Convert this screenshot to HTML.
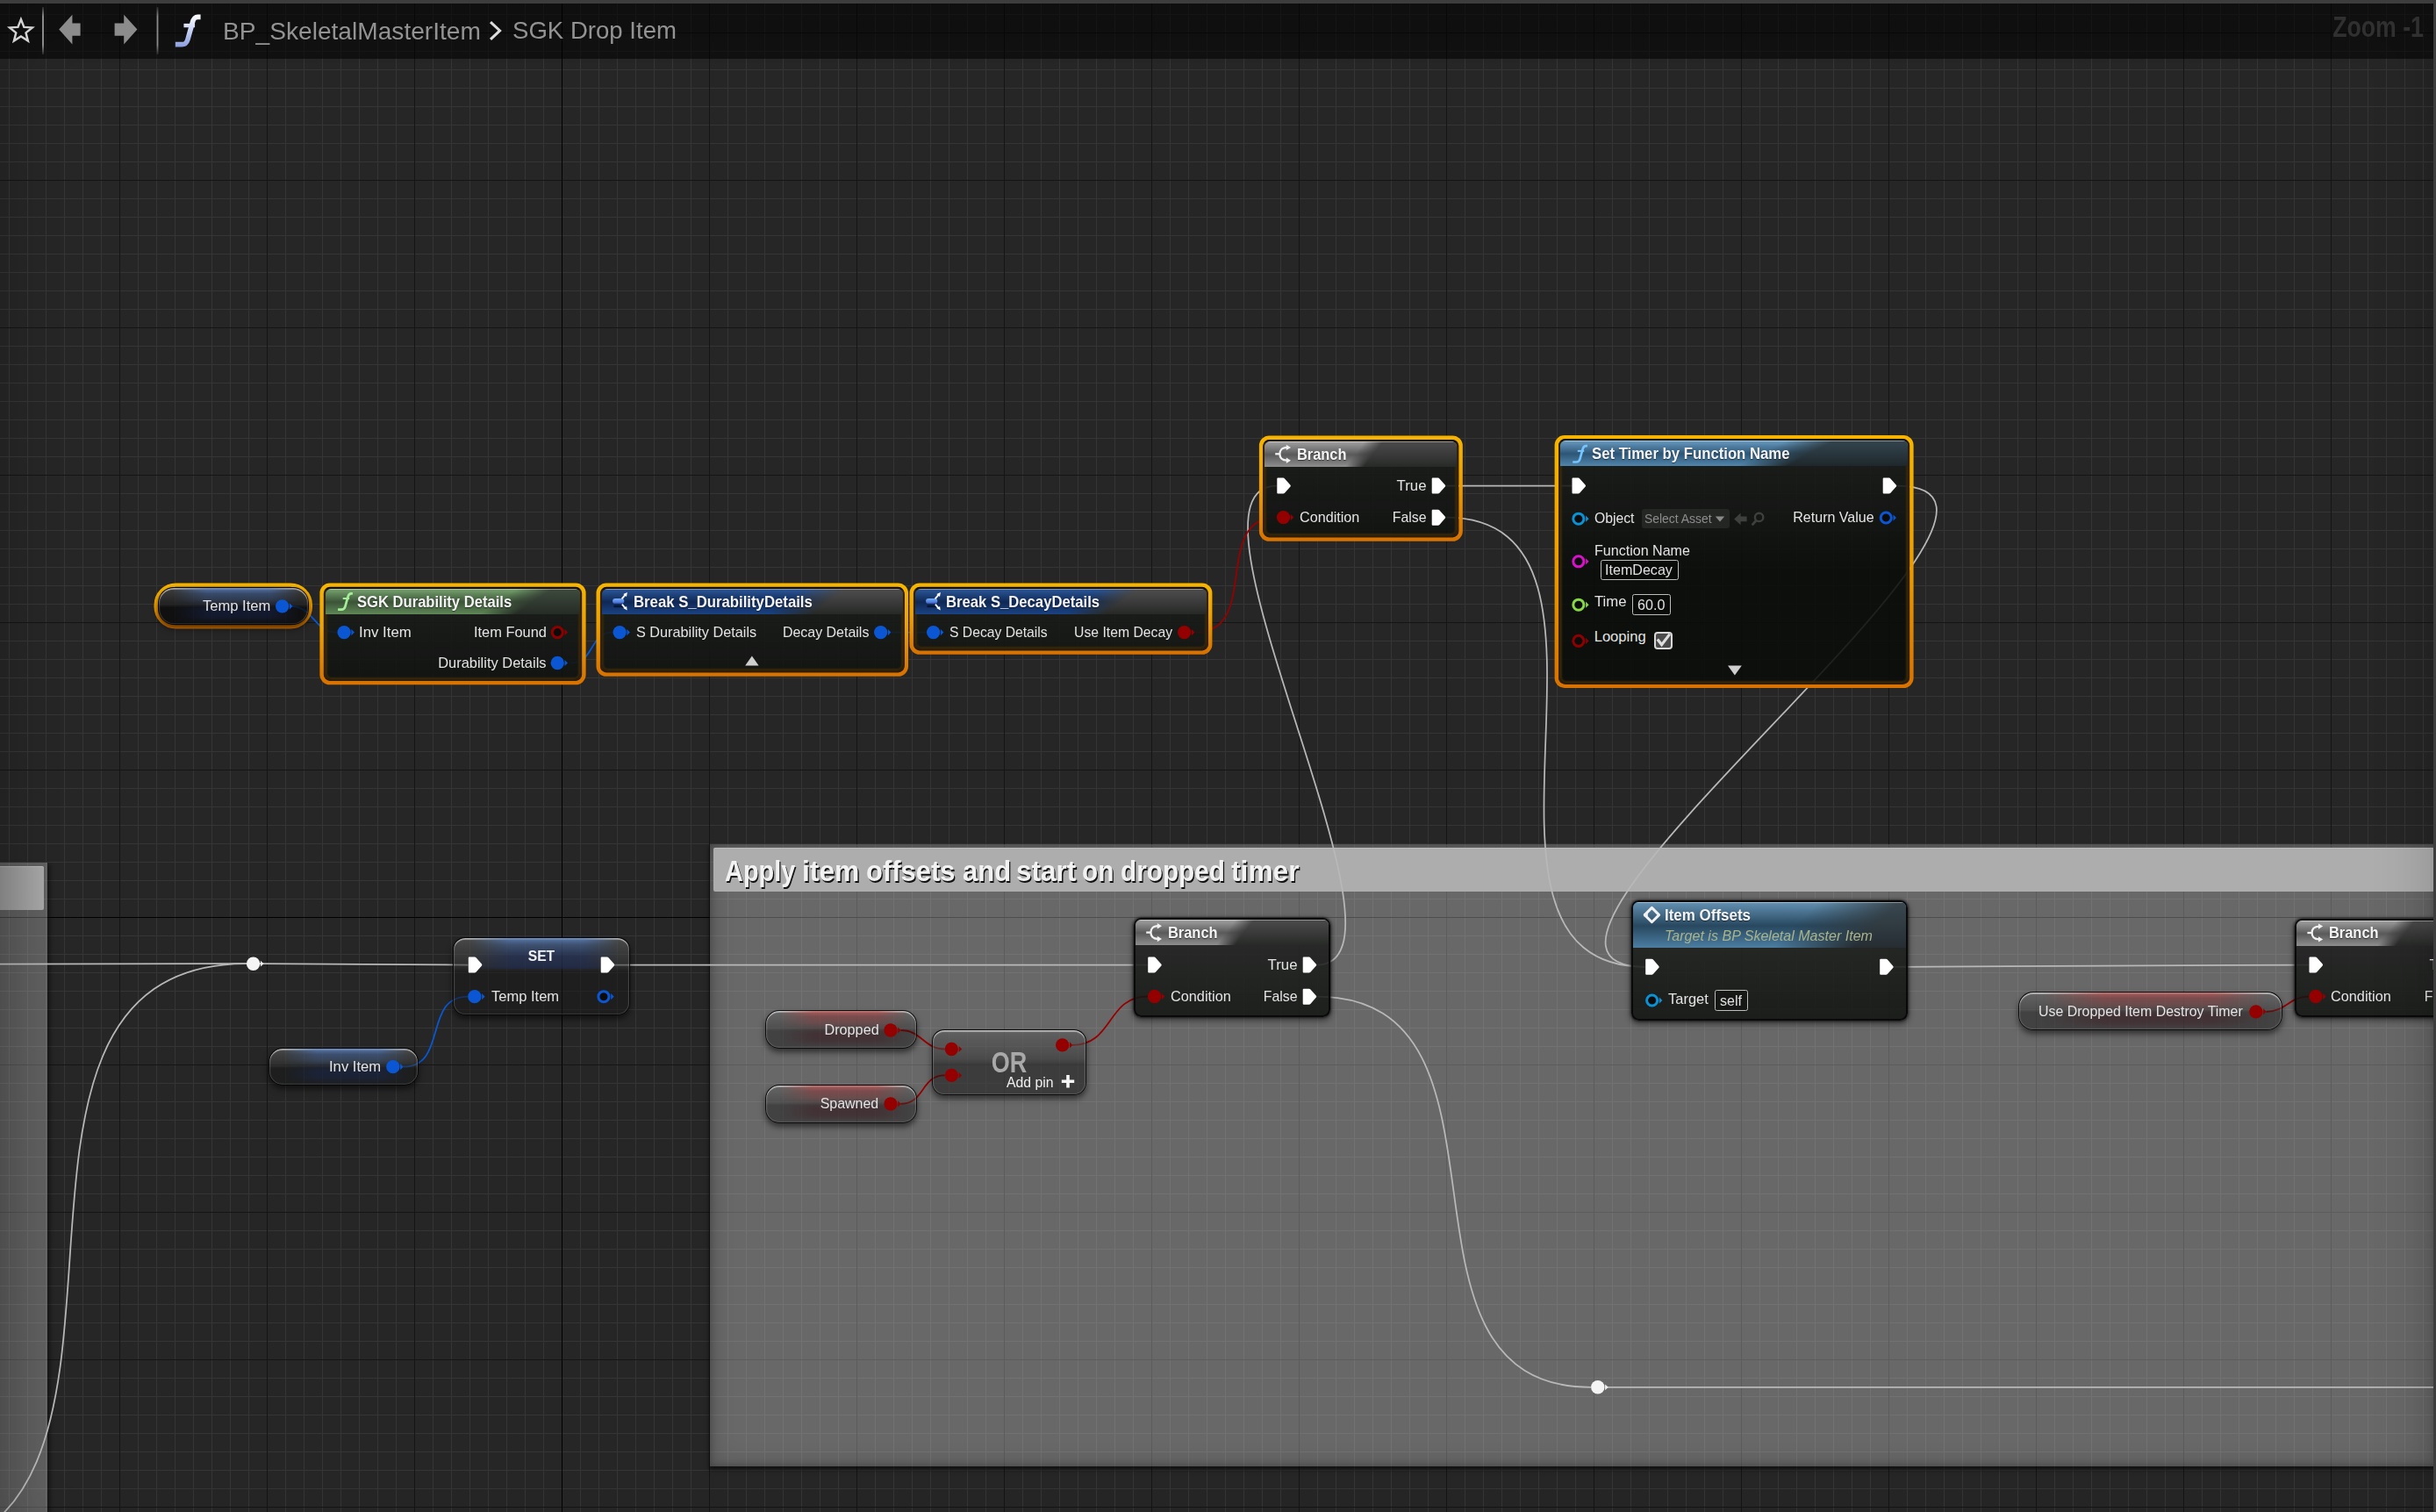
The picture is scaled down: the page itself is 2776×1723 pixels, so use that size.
<!DOCTYPE html><html lang="en"><head><meta charset="utf-8"><title>SGK Drop Item - BP_SkeletalMasterItem</title><style>
*{margin:0;padding:0;box-sizing:border-box}
html,body{width:2776px;height:1723px;overflow:hidden;background:#262626}
body{font-family:"Liberation Sans",Arial,sans-serif;position:relative}
#g{position:absolute;left:0;top:0;width:2776px;height:1723px;overflow:hidden;background-color:#262626;
background-image:linear-gradient(#000,#000),linear-gradient(#000,#000),
linear-gradient(to right,#151515 1px,transparent 1px),linear-gradient(to bottom,#151515 1px,transparent 1px),
linear-gradient(to right,#353535 1px,transparent 1px),linear-gradient(to bottom,#353535 1px,transparent 1px);
background-size:1px 100%,100% 1px,168px 168px,168px 168px,21px 21px,21px 21px;
background-position:640px 0,0 1045px,136px 0,0 37px,10px 0,0 16px;
background-repeat:no-repeat,no-repeat,repeat,repeat,repeat,repeat}
.a{position:absolute}
.t{position:absolute;white-space:nowrap;display:block}
svg{position:absolute;left:0;top:0;overflow:visible}
.cm{position:absolute;background:rgba(255,255,255,.305);box-shadow:0 3px 5px 1px rgba(0,0,0,.55), inset 0 0 7px 1px rgba(0,0,0,.22),inset 0 0 26px 2px rgba(0,0,0,.20)}
.cmt{position:absolute;background:#adadad;border-radius:2px;box-shadow:inset 0 1px 0 rgba(255,255,255,.18)}
.n{position:absolute;border-radius:8.5px;border:2.4px solid rgba(6,6,6,.88);background-clip:padding-box;
background:linear-gradient(to bottom,rgba(255,255,255,.055) 29px,rgba(255,255,255,0) 150px),rgba(11,13,11,.84);
box-shadow:0 0 2.5px 1px rgba(0,0,0,.55),0 3px 7px 1px rgba(0,0,0,.45)}
.n.s{border-color:#140d03 #30220a #2e1d08 #30220a;box-shadow:inset 0 0 2px 2px rgba(56,40,10,.95)}
.hd{position:absolute;left:0;top:0;right:0;height:29.2px;border-radius:6.2px 6.2px 0 0;overflow:hidden}
.ho{position:absolute;left:0;top:0;right:0;bottom:0}
.hl{position:absolute;left:0;top:0;right:0;height:1.3px;background:rgba(255,255,255,.40)}
.vg{position:absolute;left:0;top:4px;width:2773px;height:1760px;box-shadow:inset 0 0 70px 0 rgba(0,0,0,.20)}
.v{position:absolute;border:1.9px solid rgba(5,5,5,.93);background-clip:padding-box;box-shadow:inset 0 1.7px 1px rgba(255,255,255,.58),inset 1.2px 0 1px rgba(255,255,255,.13),inset -1.2px 0 1px rgba(255,255,255,.13),inset 0 -1px 1px rgba(255,255,255,.10),0 4px 7px rgba(0,0,0,.55)}
.sp{position:absolute;left:0;top:0;right:0;bottom:0;border-radius:inherit;-webkit-mask-image:linear-gradient(to right,rgba(0,0,0,0) 9%,#000 32%,#000 74%,rgba(0,0,0,0) 95%);mask-image:linear-gradient(to right,rgba(0,0,0,0) 9%,#000 32%,#000 74%,rgba(0,0,0,0) 95%)}
.tb{position:absolute;border:1.3px solid #bdbdbd;border-radius:2.5px;background:rgba(0,0,0,.25)}
</style></head><body><div id="g"><div class="cm" style="left:-30px;top:983px;width:84px;height:800px;background:linear-gradient(to right,rgba(255,255,255,.225) 30px,rgba(255,255,255,.265) 84px);box-shadow:2px 3px 5px 1px rgba(0,0,0,.45)"></div><div class="cmt" style="left:-10px;top:987px;width:60px;height:50px;background:linear-gradient(to right,#8e8e8e 10px,#a6a6a6 60px)"></div><div class="cm" style="left:809px;top:962px;width:1969px;height:709px"></div><div class="cmt" style="left:813px;top:966.3px;width:1961px;height:49.4px"></div><span class="t" style="top:972.97px;font-size:33.00px;line-height:39.60px;color:#f2f2f2;font-weight:700;left:826.28px;transform-origin:0 78.9%;transform:scale(0.8760,1.000);text-shadow:1.4px 1.6px 0.6px rgba(0,0,0,.9);">Apply</span> <span class="t" style="top:972.97px;font-size:33.00px;line-height:39.60px;color:#f2f2f2;font-weight:700;left:914.23px;transform-origin:0 78.9%;transform:scale(0.9640,1.000);text-shadow:1.4px 1.6px 0.6px rgba(0,0,0,.9);">item</span> <span class="t" style="top:972.97px;font-size:33.00px;line-height:39.60px;color:#f2f2f2;font-weight:700;left:987.12px;transform-origin:0 78.9%;transform:scale(0.9370,1.000);text-shadow:1.4px 1.6px 0.6px rgba(0,0,0,.9);">offsets</span> <span class="t" style="top:972.97px;font-size:33.00px;line-height:39.60px;color:#f2f2f2;font-weight:700;left:1096.92px;transform-origin:0 78.9%;transform:scale(0.9424,1.000);text-shadow:1.4px 1.6px 0.6px rgba(0,0,0,.9);">and</span> <span class="t" style="top:972.97px;font-size:33.00px;line-height:39.60px;color:#f2f2f2;font-weight:700;left:1158.00px;transform-origin:0 78.9%;transform:scale(0.9554,1.000);text-shadow:1.4px 1.6px 0.6px rgba(0,0,0,.9);">start</span> <span class="t" style="top:972.97px;font-size:33.00px;line-height:39.60px;color:#f2f2f2;font-weight:700;left:1233.36px;transform-origin:0 78.9%;transform:scale(0.9024,1.000);text-shadow:1.4px 1.6px 0.6px rgba(0,0,0,.9);">on</span> <span class="t" style="top:972.97px;font-size:33.00px;line-height:39.60px;color:#f2f2f2;font-weight:700;left:1276.51px;transform-origin:0 78.9%;transform:scale(0.9009,1.000);text-shadow:1.4px 1.6px 0.6px rgba(0,0,0,.9);">dropped</span> <span class="t" style="top:972.97px;font-size:33.00px;line-height:39.60px;color:#f2f2f2;font-weight:700;left:1402.98px;transform-origin:0 78.9%;transform:scale(0.9617,1.000);text-shadow:1.4px 1.6px 0.6px rgba(0,0,0,.9);">timer</span> <svg width="2776" height="1723" viewBox="0 0 2776 1723"><defs><linearGradient id="sg" x1="0" y1="0" x2="0" y2="1"><stop offset="0" stop-color="#f6b400"/><stop offset="0.45" stop-color="#eea000"/><stop offset="1" stop-color="#d87200"/></linearGradient></defs><path d="M-420.0,1099.0 C-410.0,1099.0 271.0,1098.2 281.0,1098.2" stroke="#b8b8b8" stroke-width="1.75" fill="none" opacity="1"/><path d="M-122.0,1770.6 C236.5,1770.6 -77.5,1098.2 281.0,1098.2" stroke="#b8b8b8" stroke-width="1.75" fill="none" opacity="1"/><path d="M296.0,1098.2 C375.6,1098.2 453.9,1099.5 533.5,1099.5" stroke="#b8b8b8" stroke-width="1.75" fill="none" opacity="1"/><path d="M700.0,1099.5 C902.7,1099.5 1105.3,1099.6 1308.0,1099.6" stroke="#b8b8b8" stroke-width="1.75" fill="none" opacity="1"/><path d="M1500.2,1099.5 C1630.3,1099.5 1324.9,553.6 1455.0,553.6" stroke="#b8b8b8" stroke-width="1.75" fill="none" opacity="1"/><path d="M1647.5,553.6 C1695.4,553.6 1743.4,553.6 1791.3,553.6" stroke="#b8b8b8" stroke-width="1.75" fill="none" opacity="1"/><path d="M1647.5,589.7 C1894.0,589.7 1628.5,1101.8 1875.0,1101.8" stroke="#b8b8b8" stroke-width="1.75" fill="none" opacity="1"/><path d="M2161.5,553.6 C2394.8,553.6 1641.7,1101.8 1875.0,1101.8" stroke="#b8b8b8" stroke-width="1.75" fill="none" opacity="1"/><path d="M2158.0,1101.8 C2316.5,1101.8 2472.8,1099.5 2631.3,1099.5" stroke="#b8b8b8" stroke-width="1.75" fill="none" opacity="1"/><path d="M1500.2,1135.6 C1752.9,1135.6 1560.3,1580.8 1813.0,1580.8" stroke="#b8b8b8" stroke-width="1.75" fill="none" opacity="1"/><path d="M1829.0,1580.8 C1839.0,1580.8 2890.0,1580.8 2900.0,1580.8" stroke="#b8b8b8" stroke-width="1.75" fill="none" opacity="1"/><path d="M330.6,690.8 C358.5,690.8 356.6,720.6 384.5,720.6" stroke="#0958d0" stroke-width="1.8" fill="none" opacity="1"/><path d="M650.5,755.5 C678.1,755.5 670.9,720.6 698.5,720.6" stroke="#0958d0" stroke-width="1.8" fill="none" opacity="1"/><path d="M1016.0,720.6 C1029.3,720.6 1042.7,720.6 1056.0,720.6" stroke="#0958d0" stroke-width="1.8" fill="none" opacity="1"/><path d="M1362.5,720.6 C1437.0,720.6 1380.5,589.6 1455.0,589.6" stroke="#970000" stroke-width="1.8" fill="none" opacity="1"/><path d="M459.5,1215.7 C510.7,1215.7 481.8,1135.7 533.0,1135.7" stroke="#0958d0" stroke-width="1.8" fill="none" opacity="1"/><path d="M1026.5,1174.0 C1050.4,1174.0 1052.8,1195.5 1076.7,1195.5" stroke="#970000" stroke-width="1.8" fill="none" opacity="1"/><path d="M1026.5,1257.9 C1054.1,1257.9 1049.1,1225.4 1076.7,1225.4" stroke="#970000" stroke-width="1.8" fill="none" opacity="1"/><path d="M1222.0,1190.9 C1269.1,1190.9 1260.9,1135.5 1308.0,1135.5" stroke="#970000" stroke-width="1.8" fill="none" opacity="1"/><path d="M2582.5,1152.8 C2604.5,1152.8 2609.3,1135.5 2631.3,1135.5" stroke="#970000" stroke-width="1.8" fill="none" opacity="1"/><circle cx="288.6" cy="1098.2" r="7.7" fill="#f4f4f4"/><path d="M296.90000000000003,1094.8 L300.6,1098.2 L296.90000000000003,1101.6000000000001 Z" fill="#f0f0f0"/><circle cx="1820.8" cy="1580.8" r="7.7" fill="#f4f4f4"/><path d="M1829.1,1577.3999999999999 L1832.8,1580.8 L1829.1,1584.2 Z" fill="#f0f0f0"/><rect x="177.70" y="666.60" width="176.10" height="47.80" rx="22.80" fill="rgba(0,0,0,.25)" stroke="url(#sg)" stroke-width="4.4"/><rect x="366.60" y="666.60" width="298.80" height="111.50" rx="9.30" fill="rgba(0,0,0,.25)" stroke="url(#sg)" stroke-width="4.4"/><rect x="681.70" y="666.60" width="351.10" height="102.00" rx="9.30" fill="rgba(0,0,0,.25)" stroke="url(#sg)" stroke-width="4.4"/><rect x="1038.70" y="666.60" width="340.50" height="77.00" rx="9.30" fill="rgba(0,0,0,.25)" stroke="url(#sg)" stroke-width="4.4"/><rect x="1437.10" y="498.70" width="227.50" height="115.90" rx="9.30" fill="rgba(0,0,0,.25)" stroke="url(#sg)" stroke-width="4.4"/><rect x="1773.80" y="498.10" width="404.60" height="283.70" rx="9.30" fill="rgba(0,0,0,.25)" stroke="url(#sg)" stroke-width="4.4"/></svg><div class="n s" style="left:368.70px;top:668.70px;width:294.60px;height:107.30px"><div class="hd" style="height:29.2px;background:linear-gradient(to bottom,#78a470 0%,#3b5437 52%,#5f8757 100%)"><i class="ho" style="background:linear-gradient(to bottom,#3e4b3e,#252b25);-webkit-mask-image:linear-gradient(145deg,rgba(0,0,0,0) 125px,#000 148px);mask-image:linear-gradient(145deg,rgba(0,0,0,0) 125px,#000 148px)"></i><i class="hl"></i></div></div><div class="n s" style="left:683.80px;top:668.70px;width:346.90px;height:97.80px"><div class="hd" style="height:29.2px;background:linear-gradient(to bottom,#2c5899 0%,#0f2855 52%,#1a4384 100%)"><i class="ho" style="background:linear-gradient(to bottom,#4e4e4e,#272927);-webkit-mask-image:linear-gradient(143deg,rgba(0,0,0,0) 137px,#000 167px);mask-image:linear-gradient(143deg,rgba(0,0,0,0) 137px,#000 167px)"></i><i class="hl"></i></div></div><div class="n s" style="left:1040.80px;top:668.70px;width:336.30px;height:72.80px"><div class="hd" style="height:29.2px;background:linear-gradient(to bottom,#2c5899 0%,#0f2855 52%,#1a4384 100%)"><i class="ho" style="background:linear-gradient(to bottom,#4e4e4e,#272927);-webkit-mask-image:linear-gradient(144deg,rgba(0,0,0,0) 124px,#000 150px);mask-image:linear-gradient(144deg,rgba(0,0,0,0) 124px,#000 150px)"></i><i class="hl"></i></div></div><div class="n s" style="left:1439.20px;top:500.80px;width:223.30px;height:111.70px"><div class="hd" style="height:29.2px;background:linear-gradient(to bottom,#a2a2a2 0%,#5a5a5a 52%,#8e8e8e 100%)"><i class="ho" style="background:linear-gradient(to bottom,#4b4b4b,#282a28);-webkit-mask-image:linear-gradient(127deg,rgba(0,0,0,0) 91px,#000 108px);mask-image:linear-gradient(127deg,rgba(0,0,0,0) 91px,#000 108px)"></i><i class="hl"></i></div></div><div class="n s" style="left:1775.90px;top:500.20px;width:400.40px;height:279.50px"><div class="hd" style="height:29.2px;background:linear-gradient(to bottom,#6a9cc2 0%,#2d5676 52%,#5185ab 100%)"><i class="ho" style="background:linear-gradient(to bottom,#34454f,#1e282c);-webkit-mask-image:linear-gradient(152deg,rgba(0,0,0,0) 121px,#000 147px);mask-image:linear-gradient(152deg,rgba(0,0,0,0) 121px,#000 147px)"></i><i class="hl"></i></div></div><div class="n" style="left:1292.10px;top:1046.00px;width:223.70px;height:112.60px"><div class="hd" style="height:29.2px;background:linear-gradient(to bottom,#a2a2a2 0%,#5a5a5a 52%,#8e8e8e 100%)"><i class="ho" style="background:linear-gradient(to bottom,#4b4b4b,#282a28);-webkit-mask-image:linear-gradient(127deg,rgba(0,0,0,0) 91px,#000 108px);mask-image:linear-gradient(127deg,rgba(0,0,0,0) 91px,#000 108px)"></i><i class="hl"></i></div></div><div class="n" style="left:1859.40px;top:1025.50px;width:314.50px;height:137.90px"><div class="hd" style="height:52.2px;background:linear-gradient(to bottom,#6391b3 0%,#28485f 52%,#4c7ea2 100%)"><i class="ho" style="background:linear-gradient(to bottom,#3a4850,#262e33);-webkit-mask-image:linear-gradient(135deg,rgba(0,0,0,0) 150px,#000 214px);mask-image:linear-gradient(135deg,rgba(0,0,0,0) 150px,#000 214px)"></i><i class="hl"></i></div></div><div class="n" style="left:2615.40px;top:1046.50px;width:223.60px;height:112.00px"><div class="hd" style="height:29.2px;background:linear-gradient(to bottom,#a2a2a2 0%,#5a5a5a 52%,#8e8e8e 100%)"><i class="ho" style="background:linear-gradient(to bottom,#4b4b4b,#282a28);-webkit-mask-image:linear-gradient(127deg,rgba(0,0,0,0) 91px,#000 108px);mask-image:linear-gradient(127deg,rgba(0,0,0,0) 91px,#000 108px)"></i><i class="hl"></i></div></div><div class="v" style="left:180.00px;top:669.00px;width:171.50px;height:43.00px;border-radius:18px;background:linear-gradient(to bottom,rgba(255,255,255,.19) 0,rgba(255,255,255,.07) 47%,rgba(255,255,255,0) 54%),rgba(10,10,10,.66);background-clip:padding-box"><i class="sp" style="background:linear-gradient(to bottom,rgba(92,130,190,.80) 0%,rgba(58,96,160,.50) 16%,rgba(58,96,160,.30) 34%,rgba(26,43,96,.16) 48%,rgba(26,43,96,.40) 62%,rgba(26,43,96,.36) 80%,rgba(26,43,96,0) 100%)"></i></div><div class="v" style="left:306.30px;top:1194.00px;width:171.20px;height:43.00px;border-radius:16px;background:linear-gradient(to bottom,rgba(255,255,255,.19) 0,rgba(255,255,255,.07) 47%,rgba(255,255,255,0) 54%),rgba(22,23,22,.52);background-clip:padding-box"><i class="sp" style="background:linear-gradient(to bottom,rgba(92,130,190,.80) 0%,rgba(58,96,160,.50) 16%,rgba(58,96,160,.30) 34%,rgba(26,43,96,.16) 48%,rgba(26,43,96,.40) 62%,rgba(26,43,96,.36) 80%,rgba(26,43,96,0) 100%)"></i></div><div class="v" style="left:872.30px;top:1151.20px;width:172.40px;height:44.30px;border-radius:16px;background:linear-gradient(to bottom,rgba(255,255,255,.19) 0,rgba(255,255,255,.07) 47%,rgba(255,255,255,0) 54%),rgba(14,14,14,.42);background-clip:padding-box"><i class="sp" style="background:linear-gradient(to bottom,rgba(184,90,88,.80) 0%,rgba(150,56,58,.50) 16%,rgba(150,56,58,.30) 34%,rgba(67,25,34,.16) 48%,rgba(67,25,34,.40) 62%,rgba(67,25,34,.36) 80%,rgba(67,25,34,0) 100%)"></i></div><div class="v" style="left:872.30px;top:1235.60px;width:172.40px;height:44.00px;border-radius:16px;background:linear-gradient(to bottom,rgba(255,255,255,.19) 0,rgba(255,255,255,.07) 47%,rgba(255,255,255,0) 54%),rgba(14,14,14,.42);background-clip:padding-box"><i class="sp" style="background:linear-gradient(to bottom,rgba(184,90,88,.80) 0%,rgba(150,56,58,.50) 16%,rgba(150,56,58,.30) 34%,rgba(67,25,34,.16) 48%,rgba(67,25,34,.40) 62%,rgba(67,25,34,.36) 80%,rgba(67,25,34,0) 100%)"></i></div><div class="v" style="left:2300.40px;top:1130.40px;width:300.30px;height:43.70px;border-radius:17px;background:linear-gradient(to bottom,rgba(255,255,255,.19) 0,rgba(255,255,255,.07) 47%,rgba(255,255,255,0) 54%),rgba(14,14,14,.42);background-clip:padding-box"><i class="sp" style="background:linear-gradient(to bottom,rgba(184,90,88,.80) 0%,rgba(150,56,58,.50) 16%,rgba(150,56,58,.30) 34%,rgba(67,25,34,.16) 48%,rgba(67,25,34,.40) 62%,rgba(67,25,34,.36) 80%,rgba(67,25,34,0) 100%)"></i></div><div class="v" style="left:516.30px;top:1068.00px;width:201.40px;height:88.80px;border-radius:14px;background:linear-gradient(to bottom,rgba(255,255,255,.19) 0,rgba(255,255,255,.07) 37%,rgba(255,255,255,0) 44%),rgba(22,23,22,.55);background-clip:padding-box"><i class="sp" style="background:linear-gradient(to bottom,rgba(92,130,190,.80) 0%,rgba(58,96,160,.50) 9%,rgba(26,43,96,.50) 24%,rgba(26,43,96,.48) 39.5%,rgba(26,43,96,0) 41%)"></i></div><div class="v" style="left:1061.60px;top:1172.80px;width:176.10px;height:75.60px;border-radius:14px;background:linear-gradient(to bottom,rgba(255,255,255,.19) 0,rgba(255,255,255,.07) 45%,rgba(255,255,255,0) 52%),rgba(22,22,22,.52);background-clip:padding-box"></div><div class="a" style="left:1871px;top:580.4px;width:99.6px;height:21.4px;border-radius:3px;background:#242624"></div><div class="tb" style="left:1824px;top:637.6px;width:89px;height:23px"></div><div class="tb" style="left:1860px;top:677.4px;width:44.2px;height:23.3px"></div><div class="tb" style="left:1954px;top:1128.4px;width:38.2px;height:23.3px"></div><div class="a" style="left:1884.8px;top:719.6px;width:20.8px;height:20.8px;border-radius:4px;background:#4b4b4b;border:2.8px solid #d9d9d9"></div><svg width="2776" height="1723" viewBox="0 0 2776 1723"><circle cx="321.65" cy="690.80" r="7.65" fill="#0b57d3"/><path d="M329.90,687.20 L333.40,690.80 L329.90,694.40 Z" fill="#0b57d3"/><circle cx="392.15" cy="720.60" r="7.65" fill="#0b57d3"/><path d="M400.40,717.00 L403.90,720.60 L400.40,724.20 Z" fill="#0b57d3"/><circle cx="635.25" cy="720.60" r="6.05" fill="#0b0b0b" stroke="#8e0000" stroke-width="3.0"/><path d="M643.50,717.00 L647.00,720.60 L643.50,724.20 Z" fill="#8e0000"/><circle cx="635.25" cy="755.50" r="7.65" fill="#0b57d3"/><path d="M643.50,751.90 L647.00,755.50 L643.50,759.10 Z" fill="#0b57d3"/><circle cx="706.15" cy="720.60" r="7.65" fill="#0b57d3"/><path d="M714.40,717.00 L717.90,720.60 L714.40,724.20 Z" fill="#0b57d3"/><circle cx="1003.65" cy="720.60" r="7.65" fill="#0b57d3"/><path d="M1011.90,717.00 L1015.40,720.60 L1011.90,724.20 Z" fill="#0b57d3"/><circle cx="1063.65" cy="720.60" r="7.65" fill="#0b57d3"/><path d="M1071.90,717.00 L1075.40,720.60 L1071.90,724.20 Z" fill="#0b57d3"/><circle cx="1349.65" cy="720.60" r="7.65" fill="#940000"/><path d="M1357.90,717.00 L1361.40,720.60 L1357.90,724.20 Z" fill="#940000"/><path transform="translate(1455.10,553.60)" d="M0.2,-8.0 Q0.2,-9.0 1.2,-9.0 L7.2,-9.0 Q8.2,-9.0 8.9,-8.2 L15.4,-0.9 Q16.1,0 15.4,0.9 L8.9,8.2 Q8.2,9.0 7.2,9.0 L1.2,9.0 Q0.2,9.0 0.2,8.0 Z" fill="#fff"/><path transform="translate(1631.50,553.60)" d="M0.2,-8.0 Q0.2,-9.0 1.2,-9.0 L7.2,-9.0 Q8.2,-9.0 8.9,-8.2 L15.4,-0.9 Q16.1,0 15.4,0.9 L8.9,8.2 Q8.2,9.0 7.2,9.0 L1.2,9.0 Q0.2,9.0 0.2,8.0 Z" fill="#fff"/><path transform="translate(1631.50,589.70)" d="M0.2,-8.0 Q0.2,-9.0 1.2,-9.0 L7.2,-9.0 Q8.2,-9.0 8.9,-8.2 L15.4,-0.9 Q16.1,0 15.4,0.9 L8.9,8.2 Q8.2,9.0 7.2,9.0 L1.2,9.0 Q0.2,9.0 0.2,8.0 Z" fill="#fff"/><circle cx="1462.55" cy="589.60" r="7.65" fill="#940000"/><path d="M1470.80,586.00 L1474.30,589.60 L1470.80,593.20 Z" fill="#940000"/><path transform="translate(1791.30,553.60)" d="M0.2,-8.0 Q0.2,-9.0 1.2,-9.0 L7.2,-9.0 Q8.2,-9.0 8.9,-8.2 L15.4,-0.9 Q16.1,0 15.4,0.9 L8.9,8.2 Q8.2,9.0 7.2,9.0 L1.2,9.0 Q0.2,9.0 0.2,8.0 Z" fill="#fff"/><path transform="translate(2145.50,553.60)" d="M0.2,-8.0 Q0.2,-9.0 1.2,-9.0 L7.2,-9.0 Q8.2,-9.0 8.9,-8.2 L15.4,-0.9 Q16.1,0 15.4,0.9 L8.9,8.2 Q8.2,9.0 7.2,9.0 L1.2,9.0 Q0.2,9.0 0.2,8.0 Z" fill="#fff"/><circle cx="1798.85" cy="591.20" r="6.05" fill="#0b0b0b" stroke="#0a92d4" stroke-width="3.0"/><path d="M1807.10,587.60 L1810.60,591.20 L1807.10,594.80 Z" fill="#0a92d4"/><circle cx="2149.25" cy="590.00" r="6.05" fill="#0b0b0b" stroke="#0b57d3" stroke-width="3.0"/><path d="M2157.50,586.40 L2161.00,590.00 L2157.50,593.60 Z" fill="#0b57d3"/><circle cx="1798.85" cy="639.80" r="6.05" fill="#0b0b0b" stroke="#d812ca" stroke-width="3.0"/><path d="M1807.10,636.20 L1810.60,639.80 L1807.10,643.40 Z" fill="#d812ca"/><circle cx="1798.85" cy="689.20" r="6.05" fill="#0b0b0b" stroke="#88d846" stroke-width="3.0"/><path d="M1807.10,685.60 L1810.60,689.20 L1807.10,692.80 Z" fill="#88d846"/><circle cx="1798.85" cy="730.40" r="6.05" fill="#0b0b0b" stroke="#8e0000" stroke-width="3.0"/><path d="M1807.10,726.80 L1810.60,730.40 L1807.10,734.00 Z" fill="#8e0000"/><path transform="translate(533.60,1099.50)" d="M0.2,-8.0 Q0.2,-9.0 1.2,-9.0 L7.2,-9.0 Q8.2,-9.0 8.9,-8.2 L15.4,-0.9 Q16.1,0 15.4,0.9 L8.9,8.2 Q8.2,9.0 7.2,9.0 L1.2,9.0 Q0.2,9.0 0.2,8.0 Z" fill="#fff"/><path transform="translate(684.50,1099.50)" d="M0.2,-8.0 Q0.2,-9.0 1.2,-9.0 L7.2,-9.0 Q8.2,-9.0 8.9,-8.2 L15.4,-0.9 Q16.1,0 15.4,0.9 L8.9,8.2 Q8.2,9.0 7.2,9.0 L1.2,9.0 Q0.2,9.0 0.2,8.0 Z" fill="#fff"/><circle cx="540.85" cy="1135.70" r="7.65" fill="#0b57d3"/><path d="M549.10,1132.10 L552.60,1135.70 L549.10,1139.30 Z" fill="#0b57d3"/><circle cx="687.95" cy="1135.70" r="6.05" fill="#0b0b0b" stroke="#0b57d3" stroke-width="3.0"/><path d="M696.20,1132.10 L699.70,1135.70 L696.20,1139.30 Z" fill="#0b57d3"/><circle cx="447.85" cy="1215.70" r="7.65" fill="#0b57d3"/><path d="M456.10,1212.10 L459.60,1215.70 L456.10,1219.30 Z" fill="#0b57d3"/><circle cx="1014.95" cy="1174.00" r="7.65" fill="#940000"/><path d="M1023.20,1170.40 L1026.70,1174.00 L1023.20,1177.60 Z" fill="#940000"/><circle cx="1014.95" cy="1257.90" r="7.65" fill="#940000"/><path d="M1023.20,1254.30 L1026.70,1257.90 L1023.20,1261.50 Z" fill="#940000"/><circle cx="1084.35" cy="1195.50" r="7.65" fill="#940000"/><path d="M1092.60,1191.90 L1096.10,1195.50 L1092.60,1199.10 Z" fill="#940000"/><circle cx="1084.35" cy="1225.40" r="7.65" fill="#940000"/><path d="M1092.60,1221.80 L1096.10,1225.40 L1092.60,1229.00 Z" fill="#940000"/><circle cx="1210.65" cy="1190.90" r="7.65" fill="#940000"/><path d="M1218.90,1187.30 L1222.40,1190.90 L1218.90,1194.50 Z" fill="#940000"/><path transform="translate(1308.00,1099.60)" d="M0.2,-8.0 Q0.2,-9.0 1.2,-9.0 L7.2,-9.0 Q8.2,-9.0 8.9,-8.2 L15.4,-0.9 Q16.1,0 15.4,0.9 L8.9,8.2 Q8.2,9.0 7.2,9.0 L1.2,9.0 Q0.2,9.0 0.2,8.0 Z" fill="#fff"/><path transform="translate(1484.50,1099.60)" d="M0.2,-8.0 Q0.2,-9.0 1.2,-9.0 L7.2,-9.0 Q8.2,-9.0 8.9,-8.2 L15.4,-0.9 Q16.1,0 15.4,0.9 L8.9,8.2 Q8.2,9.0 7.2,9.0 L1.2,9.0 Q0.2,9.0 0.2,8.0 Z" fill="#fff"/><path transform="translate(1484.50,1135.70)" d="M0.2,-8.0 Q0.2,-9.0 1.2,-9.0 L7.2,-9.0 Q8.2,-9.0 8.9,-8.2 L15.4,-0.9 Q16.1,0 15.4,0.9 L8.9,8.2 Q8.2,9.0 7.2,9.0 L1.2,9.0 Q0.2,9.0 0.2,8.0 Z" fill="#fff"/><circle cx="1315.65" cy="1135.50" r="7.65" fill="#940000"/><path d="M1323.90,1131.90 L1327.40,1135.50 L1323.90,1139.10 Z" fill="#940000"/><path transform="translate(1875.00,1101.80)" d="M0.2,-8.0 Q0.2,-9.0 1.2,-9.0 L7.2,-9.0 Q8.2,-9.0 8.9,-8.2 L15.4,-0.9 Q16.1,0 15.4,0.9 L8.9,8.2 Q8.2,9.0 7.2,9.0 L1.2,9.0 Q0.2,9.0 0.2,8.0 Z" fill="#fff"/><path transform="translate(2142.00,1101.80)" d="M0.2,-8.0 Q0.2,-9.0 1.2,-9.0 L7.2,-9.0 Q8.2,-9.0 8.9,-8.2 L15.4,-0.9 Q16.1,0 15.4,0.9 L8.9,8.2 Q8.2,9.0 7.2,9.0 L1.2,9.0 Q0.2,9.0 0.2,8.0 Z" fill="#fff"/><circle cx="1882.65" cy="1140.00" r="6.05" fill="#0b0b0b" stroke="#0a92d4" stroke-width="3.0"/><path d="M1890.90,1136.40 L1894.40,1140.00 L1890.90,1143.60 Z" fill="#0a92d4"/><circle cx="2570.85" cy="1152.80" r="7.65" fill="#940000"/><path d="M2579.10,1149.20 L2582.60,1152.80 L2579.10,1156.40 Z" fill="#940000"/><path transform="translate(2631.30,1099.50)" d="M0.2,-8.0 Q0.2,-9.0 1.2,-9.0 L7.2,-9.0 Q8.2,-9.0 8.9,-8.2 L15.4,-0.9 Q16.1,0 15.4,0.9 L8.9,8.2 Q8.2,9.0 7.2,9.0 L1.2,9.0 Q0.2,9.0 0.2,8.0 Z" fill="#fff"/><circle cx="2638.95" cy="1135.50" r="7.65" fill="#940000"/><path d="M2647.20,1131.90 L2650.70,1135.50 L2647.20,1139.10 Z" fill="#940000"/><g transform="translate(1453.20,507.30)" fill="none" stroke="#f2f2f2" stroke-width="2.3" stroke-linecap="butt"><path d="M0,10 L5.6,10"/><path d="M13.4,2.6 C7.4,2.6 5.2,6.2 5.2,10 C5.2,13.8 7.4,17.4 13.4,17.4"/><path d="M12.6,-0.6 L17.8,2.6 L12.6,5.8 Z" fill="#f2f2f2" stroke="none"/><path d="M12.6,14.2 L17.8,17.4 L12.6,20.6 Z" fill="#f2f2f2" stroke="none"/></g><g transform="translate(1306.20,1052.60)" fill="none" stroke="#f2f2f2" stroke-width="2.3" stroke-linecap="butt"><path d="M0,10 L5.6,10"/><path d="M13.4,2.6 C7.4,2.6 5.2,6.2 5.2,10 C5.2,13.8 7.4,17.4 13.4,17.4"/><path d="M12.6,-0.6 L17.8,2.6 L12.6,5.8 Z" fill="#f2f2f2" stroke="none"/><path d="M12.6,14.2 L17.8,17.4 L12.6,20.6 Z" fill="#f2f2f2" stroke="none"/></g><g transform="translate(2629.40,1053.00)" fill="none" stroke="#f2f2f2" stroke-width="2.3" stroke-linecap="butt"><path d="M0,10 L5.6,10"/><path d="M13.4,2.6 C7.4,2.6 5.2,6.2 5.2,10 C5.2,13.8 7.4,17.4 13.4,17.4"/><path d="M12.6,-0.6 L17.8,2.6 L12.6,5.8 Z" fill="#f2f2f2" stroke="none"/><path d="M12.6,14.2 L17.8,17.4 L12.6,20.6 Z" fill="#f2f2f2" stroke="none"/></g><g transform="translate(698.10,682.00)"><defs><linearGradient id="bk698" x1="0" y1="0" x2="0" y2="1"><stop offset="0" stop-color="#74aef6"/><stop offset=".55" stop-color="#5a8ae6"/><stop offset="1" stop-color="#3f5cc0"/></linearGradient></defs><rect x="1.2" y="7.6" width="12" height="2.6" rx="1.3" fill="#04102a" opacity=".8"/><rect x="0" y="0" width="13.2" height="5.8" rx="2.9" fill="url(#bk698)"/><path d="M10.6,0.4 L14.4,-4.2 M10.8,6.6 L14.4,11.0" stroke="#f4f6fa" stroke-width="1.9" fill="none"/><path d="M12.2,-5.0 L16.8,-6.9 L15.9,-2.0 Z M12.2,11.0 L16.0,8.9 L16.6,13.4 Z" fill="#ffffff"/></g><g transform="translate(1055.10,682.00)"><defs><linearGradient id="bk1055" x1="0" y1="0" x2="0" y2="1"><stop offset="0" stop-color="#74aef6"/><stop offset=".55" stop-color="#5a8ae6"/><stop offset="1" stop-color="#3f5cc0"/></linearGradient></defs><rect x="1.2" y="7.6" width="12" height="2.6" rx="1.3" fill="#04102a" opacity=".8"/><rect x="0" y="0" width="13.2" height="5.8" rx="2.9" fill="url(#bk1055)"/><path d="M10.6,0.4 L14.4,-4.2 M10.8,6.6 L14.4,11.0" stroke="#f4f6fa" stroke-width="1.9" fill="none"/><path d="M12.2,-5.0 L16.8,-6.9 L15.9,-2.0 Z M12.2,11.0 L16.0,8.9 L16.6,13.4 Z" fill="#ffffff"/></g><g transform="translate(1872.6,1032.8)" fill="none" stroke="#f2f2f2" stroke-width="2.9" stroke-linejoin="round"><path d="M9.8,1.6 L18.0,9.8 L9.8,18.0 L1.6,9.8 Z"/><path d="M0.4,9.8 L5.2,9.8" stroke="#f0f0f0" stroke-width="3.2"/></g><g transform="translate(384.90,674.70) scale(1.0)" fill="none" stroke="#a4ee98" stroke-linejoin="round"><path d="M17.0,1.6 L15.2,1.6 C12.9,1.6 12.2,3.0 11.5,5.6 L8.5,16.4 C7.7,19.1 6.8,19.9 4.4,19.9 L0.2,19.9" stroke-width="2.7"/><path d="M5.8,7.3 L13.2,7.3" stroke-width="2.11"/></g><g transform="translate(1792.00,506.60) scale(1.0)" fill="none" stroke="#74c4ff" stroke-linejoin="round"><path d="M17.0,1.6 L15.2,1.6 C12.9,1.6 12.2,3.0 11.5,5.6 L8.5,16.4 C7.7,19.1 6.8,19.9 4.4,19.9 L0.2,19.9" stroke-width="2.7"/><path d="M5.8,7.3 L13.2,7.3" stroke-width="2.11"/></g><path d="M849.2,758.6 L864.6,758.6 L856.9,747.6 Z" fill="#cfcfcf"/><path d="M1969.0,758.4 L1984.8,758.4 L1976.9,769.6 Z" fill="#cfcfcf"/><path d="M1217.0,1225.0 L1217.0,1239.4 M1209.8,1232.2 L1224.2,1232.2" stroke="#f6f6f6" stroke-width="3.6" fill="none"/><path d="M1976.2,591.4 L1983.6,584.6 L1983.6,588.6 L1990.6,588.6 L1990.6,594.2 L1983.6,594.2 L1983.6,598.2 Z" fill="#3e403e"/><circle cx="2004.6" cy="589.4" r="4.7" fill="none" stroke="#3e403e" stroke-width="2.4"/><path d="M2001.2,593.2 L1996.6,598.4" stroke="#3e403e" stroke-width="2.8"/><path d="M1954.8,588.6 L1965.2,588.6 L1960.0,594.4 Z" fill="#8a8a8a"/><path d="M1888.8,728.6 L1893.6,734.6 L1902.8,722.6" stroke="#dedede" stroke-width="3.2" fill="none"/></svg><span class="t" style="top:675.67px;font-size:18.10px;line-height:21.72px;color:#f4f4f4;font-weight:700;left:407.39px;transform-origin:0 78.9%;transform:scale(0.9171,1.000);text-shadow:0 1px 1px rgba(0,0,0,.55);">SGK Durability Details</span><span class="t" style="top:675.67px;font-size:18.10px;line-height:21.72px;color:#f4f4f4;font-weight:700;left:721.61px;transform-origin:0 78.9%;transform:scale(0.9255,1.000);text-shadow:0 1px 1px rgba(0,0,0,.55);">Break S_DurabilityDetails</span><span class="t" style="top:675.67px;font-size:18.10px;line-height:21.72px;color:#f4f4f4;font-weight:700;left:1078.32px;transform-origin:0 78.9%;transform:scale(0.9207,1.000);text-shadow:0 1px 1px rgba(0,0,0,.55);">Break S_DecayDetails</span><span class="t" style="top:507.77px;font-size:18.10px;line-height:21.72px;color:#f4f4f4;font-weight:700;left:1477.83px;transform-origin:0 78.9%;transform:scale(0.9053,1.000);text-shadow:0 1px 1px rgba(0,0,0,.55);">Branch</span><span class="t" style="top:507.17px;font-size:18.10px;line-height:21.72px;color:#f4f4f4;font-weight:700;left:1814.18px;transform-origin:0 78.9%;transform:scale(0.9244,1.000);text-shadow:0 1px 1px rgba(0,0,0,.55);">Set Timer by Function Name</span><span class="t" style="top:1052.97px;font-size:18.10px;line-height:21.72px;color:#f4f4f4;font-weight:700;left:1330.63px;transform-origin:0 78.9%;transform:scale(0.9069,1.000);text-shadow:0 1px 1px rgba(0,0,0,.55);">Branch</span><span class="t" style="top:1053.47px;font-size:18.10px;line-height:21.72px;color:#f4f4f4;font-weight:700;left:2653.93px;transform-origin:0 78.9%;transform:scale(0.9069,1.000);text-shadow:0 1px 1px rgba(0,0,0,.55);">Branch</span><span class="t" style="top:1033.27px;font-size:18.10px;line-height:21.72px;color:#f4f4f4;font-weight:700;left:1897.40px;transform-origin:0 78.9%;transform:scale(0.9377,1.000);text-shadow:0 1px 1px rgba(0,0,0,.55);">Item Offsets</span><span class="t" style="top:1056.67px;font-size:16.20px;line-height:19.44px;color:#a9b48c;font-style:italic;left:1897.05px;transform-origin:0 78.9%;transform:scale(0.9915,1.000);">Target is BP Skeletal Master Item</span><span class="t" style="top:1079.23px;font-size:17.40px;line-height:20.88px;color:#f2f2f2;font-weight:700;left:599.88px;transform-origin:50% 78.9%;margin-left:-0.16px;transform:scale(0.9003,1.000);">SET</span><span class="t" style="top:1191.08px;font-size:33.20px;line-height:39.84px;color:#a9a9a9;font-weight:700;left:1125.10px;transform-origin:50% 78.9%;margin-left:-0.34px;transform:scale(0.8129,1.000);">OR</span><span class="t" style="top:680.74px;font-size:16.60px;line-height:19.92px;color:#e4e4e4;left:230.87px;transform-origin:0 78.9%;transform:scale(0.9985,1.000);">Temp Item</span><span class="t" style="top:710.64px;font-size:16.60px;line-height:19.92px;color:#e4e4e4;left:408.99px;transform-origin:0 78.9%;transform:scale(1.0120,1.000);">Inv Item</span><span class="t" style="top:710.64px;font-size:16.60px;line-height:19.92px;color:#e4e4e4;right:2153.16px;transform-origin:100% 78.9%;transform:scale(0.9887,1.000);">Item Found</span><span class="t" style="top:745.54px;font-size:16.60px;line-height:19.92px;color:#e4e4e4;right:2153.66px;transform-origin:100% 78.9%;transform:scale(0.9904,1.000);">Durability Details</span><span class="t" style="top:710.64px;font-size:16.60px;line-height:19.92px;color:#e4e4e4;left:724.67px;transform-origin:0 78.9%;transform:scale(0.9781,1.000);">S Durability Details</span><span class="t" style="top:710.64px;font-size:16.60px;line-height:19.92px;color:#e4e4e4;right:1785.56px;transform-origin:100% 78.9%;transform:scale(0.9621,1.000);">Decay Details</span><span class="t" style="top:710.64px;font-size:16.60px;line-height:19.92px;color:#e4e4e4;left:1081.79px;transform-origin:0 78.9%;transform:scale(0.9454,1.000);">S Decay Details</span><span class="t" style="top:710.64px;font-size:16.60px;line-height:19.92px;color:#e4e4e4;right:1440.13px;transform-origin:100% 78.9%;transform:scale(0.9490,1.000);">Use Item Decay</span><span class="t" style="top:543.64px;font-size:16.60px;line-height:19.92px;color:#e4e4e4;right:1150.04px;transform-origin:100% 78.9%;transform:scale(1.0112,1.000);">True</span><span class="t" style="top:579.74px;font-size:16.60px;line-height:19.92px;color:#e4e4e4;right:1150.06px;transform-origin:100% 78.9%;transform:scale(0.9587,1.000);">False</span><span class="t" style="top:579.64px;font-size:16.60px;line-height:19.92px;color:#e4e4e4;left:1480.89px;transform-origin:0 78.9%;transform:scale(0.9750,1.000);">Condition</span><span class="t" style="top:580.84px;font-size:16.60px;line-height:19.92px;color:#e4e4e4;left:1816.79px;transform-origin:0 78.9%;transform:scale(0.9482,1.000);">Object</span><span class="t" style="top:583.37px;font-size:14.40px;line-height:17.28px;color:#8c8c8c;left:1873.67px;transform-origin:0 78.9%;transform:scale(0.9675,1.000);">Select Asset</span><span class="t" style="top:580.24px;font-size:16.60px;line-height:19.92px;color:#e4e4e4;right:640.31px;transform-origin:100% 78.9%;transform:scale(0.9656,1.000);">Return Value</span><span class="t" style="top:618.04px;font-size:16.60px;line-height:19.92px;color:#e4e4e4;left:1816.91px;transform-origin:0 78.9%;transform:scale(0.9678,1.000);">Function Name</span><span class="t" style="top:639.89px;font-size:16.60px;line-height:19.92px;color:#e0e0e0;left:1829.05px;transform-origin:0 78.9%;transform:scale(0.9698,1.000);">ItemDecay</span><span class="t" style="top:676.34px;font-size:16.60px;line-height:19.92px;color:#e4e4e4;left:1817.16px;transform-origin:0 78.9%;transform:scale(1.0092,1.000);">Time</span><span class="t" style="top:679.99px;font-size:16.60px;line-height:19.92px;color:#e0e0e0;left:1865.59px;transform-origin:0 78.9%;transform:scale(0.9716,1.000);">60.0</span><span class="t" style="top:716.44px;font-size:16.60px;line-height:19.92px;color:#e4e4e4;left:1816.67px;transform-origin:0 78.9%;">Looping</span><span class="t" style="top:1125.84px;font-size:16.60px;line-height:19.92px;color:#e4e4e4;left:560.37px;transform-origin:0 78.9%;transform:scale(0.9959,1.000);">Temp Item</span><span class="t" style="top:1205.74px;font-size:16.60px;line-height:19.92px;color:#e4e4e4;left:375.00px;transform-origin:0 78.9%;transform:scale(1.0031,1.000);">Inv Item</span><span class="t" style="top:1164.04px;font-size:16.60px;line-height:19.92px;color:#e4e4e4;right:1774.61px;transform-origin:100% 78.9%;transform:scale(0.9766,1.000);">Dropped</span><span class="t" style="top:1247.94px;font-size:16.60px;line-height:19.92px;color:#e4e4e4;right:1774.64px;transform-origin:100% 78.9%;transform:scale(0.9618,1.000);">Spawned</span><span class="t" style="top:1223.66px;font-size:16.00px;line-height:19.20px;color:#f0f0f0;left:1146.50px;transform-origin:0 78.9%;transform:scale(0.9854,1.000);">Add pin</span><span class="t" style="top:1089.64px;font-size:16.60px;line-height:19.92px;color:#e4e4e4;right:1297.24px;transform-origin:100% 78.9%;transform:scale(1.0112,1.000);">True</span><span class="t" style="top:1125.74px;font-size:16.60px;line-height:19.92px;color:#e4e4e4;right:1297.26px;transform-origin:100% 78.9%;transform:scale(0.9561,1.000);">False</span><span class="t" style="top:1125.54px;font-size:16.60px;line-height:19.92px;color:#e4e4e4;left:1333.59px;transform-origin:0 78.9%;transform:scale(0.9808,1.000);">Condition</span><span class="t" style="top:1129.44px;font-size:16.60px;line-height:19.92px;color:#e4e4e4;left:1901.27px;transform-origin:0 78.9%;transform:scale(0.9927,1.000);">Target</span><span class="t" style="top:1131.09px;font-size:16.60px;line-height:19.92px;color:#e0e0e0;left:1960.00px;transform-origin:0 78.9%;transform:scale(0.9654,1.000);">self</span><span class="t" style="top:1142.84px;font-size:16.60px;line-height:19.92px;color:#e4e4e4;left:2323.21px;transform-origin:0 78.9%;transform:scale(0.9598,1.000);">Use Dropped Item Destroy Timer</span><span class="t" style="top:1125.54px;font-size:16.60px;line-height:19.92px;color:#e4e4e4;left:2656.49px;transform-origin:0 78.9%;transform:scale(0.9808,1.000);">Condition</span><span class="t" style="top:1089.54px;font-size:16.60px;line-height:19.92px;color:#e4e4e4;right:-26.06px;transform-origin:100% 78.9%;transform:scale(1.0112,1.000);">True</span><span class="t" style="top:1125.64px;font-size:16.60px;line-height:19.92px;color:#e4e4e4;right:-26.04px;transform-origin:100% 78.9%;transform:scale(0.9561,1.000);">False</span><div class="vg"></div><div class="a" style="left:0;top:4px;width:2776px;height:62.5px;background:rgba(0,0,0,.56)"></div><div class="a" style="left:0;top:0;width:2776px;height:4px;background:#3d3d3d"></div><div class="a" style="left:2773px;top:0;width:3px;height:1723px;background:#3d3d3d"></div><svg width="2776" height="80" viewBox="0 0 2776 80"><polygon points="23.90,22.00 27.37,30.83 36.83,31.40 29.51,37.42 31.89,46.60 23.90,41.50 15.91,46.60 18.29,37.42 10.97,31.40 20.43,30.83" fill="none" stroke="#d4d4d4" stroke-width="2.4" stroke-linejoin="miter"/><defs><linearGradient id="sp" x1="0" y1="0" x2="0" y2="1"><stop offset="0" stop-color="#8a8a8a" stop-opacity=".2"/><stop offset=".2" stop-color="#8a8a8a"/><stop offset=".8" stop-color="#8a8a8a"/><stop offset="1" stop-color="#8a8a8a" stop-opacity=".2"/></linearGradient><linearGradient id="fg" gradientUnits="userSpaceOnUse" x1="0" y1="0" x2="0" y2="21.3"><stop offset="0" stop-color="#ffffff"/><stop offset=".55" stop-color="#c2cdf2"/><stop offset="1" stop-color="#8b9ee0"/></linearGradient></defs><rect x="48" y="8" width="2" height="54" fill="url(#sp)"/><rect x="178.6" y="8" width="1.8" height="54" fill="url(#sp)"/><path d="M67.2,33.6 L82.4,16.8 L82.4,26.4 L91.6,26.4 L91.6,40.8 L82.4,40.8 L82.4,50.4 Z" fill="#8c8c8c"/><path d="M156.4,33.6 L141.2,16.8 L141.2,26.4 L130.6,26.4 L130.6,40.8 L141.2,40.8 L141.2,50.4 Z" fill="#8c8c8c"/><path d="M559.0,25.2 L569.6,34.9 L559.0,44.8" fill="none" stroke="#dcdcdc" stroke-width="3.0" stroke-linejoin="miter"/><g transform="translate(199.50,16.60) scale(1.71)" fill="none" stroke="url(#fg)" stroke-linejoin="round"><path d="M17.0,1.6 L15.2,1.6 C12.9,1.6 12.2,3.0 11.5,5.6 L8.5,16.4 C7.7,19.1 6.8,19.9 4.4,19.9 L0.2,19.9" stroke-width="3.3"/><path d="M5.8,7.3 L13.2,7.3" stroke-width="2.57"/></g></svg><span class="t" style="top:19.64px;font-size:26.90px;line-height:32.28px;color:#939393;left:253.75px;transform-origin:0 78.9%;transform:scale(1.0462,1.000);">BP_SkeletalMasterItem</span><span class="t" style="top:18.94px;font-size:26.90px;line-height:32.28px;color:#939393;left:584.36px;transform-origin:0 78.9%;transform:scale(1.0255,1.000);">SGK Drop Item</span><span class="t" style="top:11.93px;font-size:32.40px;line-height:38.88px;color:#303030;font-weight:700;right:14.37px;transform-origin:100% 78.9%;transform:scale(0.8238,1.000);">Zoom -1</span></div></body></html>
